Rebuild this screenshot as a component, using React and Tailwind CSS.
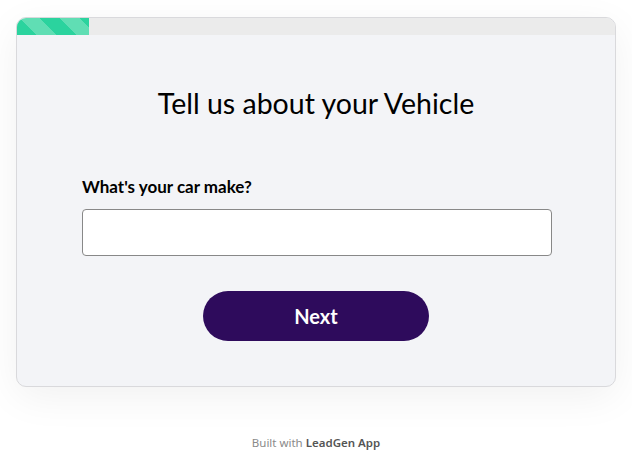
export default function App() {
  return (
    <div className="w-[632px] h-[453px] bg-white overflow-hidden font-['Lato',sans-serif]">
      <div className="pt-[17px] px-4">
        <div className="w-[600px] h-[370px] rounded-[10px] border border-[#d9d9dc] bg-[#f3f4f7] shadow-[0_10px_40px_rgba(0,0,0,0.06)] overflow-hidden flex flex-col">
          <div className="h-[17px] bg-[#ebebeb] shrink-0">
            <div className="h-full w-[72px] bg-[repeating-linear-gradient(45deg,#2bd39e_0px,#2bd39e_14px,#60deb4_14px,#60deb4_28px)]" />
          </div>
          <div className="flex flex-col items-center pt-[50px]">
            <h1 className="text-[28.5px] leading-[36px] text-black font-normal">Tell us about your Vehicle</h1>
          </div>
          <div className="px-[65px] pt-[55px]">
            <label className="block text-[17px] leading-[22px] font-bold text-black">What's your car make?</label>
            <input type="text" className="mt-[11px] block w-[470px] h-[47px] bg-white border border-[#888] rounded-[4px] outline-none" />
          </div>
          <div className="flex justify-center pt-[35px]">
            <button className="w-[226px] h-[50px] rounded-full bg-[#2e0b5c] text-white text-[20px] font-bold">Next</button>
          </div>
        </div>
      </div>
      <div className="mt-[49px] text-center text-[11.5px] leading-[14px] text-[#8a8a8a] font-['Noto_Sans',sans-serif]">
        Built with <span className="font-semibold text-[#555]">LeadGen App</span>
      </div>
    </div>
  );
}
